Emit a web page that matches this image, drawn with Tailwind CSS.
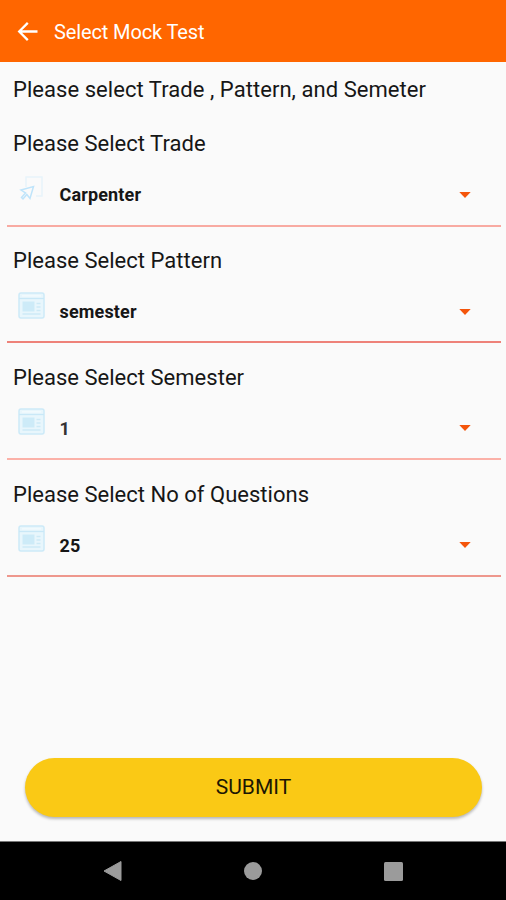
<!DOCTYPE html>
<html lang="en">
<head>
<meta charset="utf-8">
<title>Select Mock Test</title>
<script src="https://cdn.jsdelivr.net/npm/@tailwindcss/browser@4"></script>
</head>
<body class="bg-[#fafafa]">
<svg class="hidden">
  <symbol id="form" viewBox="0 0 27 27">
    <rect x="1" y="1" width="25" height="25" rx="2" fill="#e8f6fc" stroke="#cdeaf8" stroke-width="1.5"/>
    <path d="M1 6.5H26" stroke="#c9e8f7" stroke-width="1.3"/>
    <path d="M4 3.8H23" stroke="#f2fafd" stroke-width="1.5"/>
    <rect x="4.500" y="9.500" width="12" height="10" fill="#cdebf8"/>
    <path d="M18.500 11.500H22.500M18.500 15H22.500M18.500 18.500H22.500M4.500 22H22.500" stroke="#cdeaf6" stroke-width="1.3"/>
  </symbol>
  <symbol id="caret" viewBox="0 0 12 6"><path d="M0.300 0H11.700L6 6Z" fill="#f4550b"/></symbol>
</svg>
<div class="flex h-[900px] w-[506px] flex-col overflow-hidden bg-[#fafafa] font-['Roboto',sans-serif] text-[#161616]">
  <header class="flex h-[62px] shrink-0 items-center bg-[#ff6600] pt-[2px] pl-[17px] text-white">
    <svg class="mr-[16px] h-[20px] w-[21px]" viewBox="0 0 21 20" fill="none" stroke="#fff" stroke-width="2.3"><path d="M20.500 9.500H2M10.800 0.900L2.200 9.500L10.800 18.100"/></svg>
    <h1 class="text-[20px] leading-6 tracking-[-0.12px] whitespace-nowrap">Select Mock Test</h1>
  </header>
  <main class="flex grow flex-col">
    <p class="h-[66.600px] pt-[14px] pl-[13px] text-[22px] leading-[28px] tracking-[0.050px] whitespace-nowrap">Please select Trade , Pattern, and Semeter</p>
    <section class="h-[116.700px]">
      <h2 class="pl-[13px] text-[22px] leading-[30px] tracking-[0.020px]">Please Select Trade</h2>
      <div class="mr-[5px] ml-[7px] flex h-[68px] items-start border-b-2 border-[#f8aaa2] pl-[11px]">
        <svg class="mt-[16px] h-[27px] w-[27px]" viewBox="0 0 27 27" fill="none"><path d="M8 12V2H24V21H18" stroke="#e8f4fa" stroke-width="1.5"/><path d="M3 15L15.500 11.500L12 23.500L8.800 19.500L5 24L3.500 22.500L7.500 18Z" stroke="#bfe4fa" stroke-width="1.500"/></svg>
        <span class="mt-[24px] ml-[14.500px] grow text-[18px] leading-6 font-bold tracking-[0.15px]">Carpenter</span>
        <svg class="mt-[33px] mr-[30px] h-[6px] w-[12px]"><use href="#caret"/></svg>
      </div>
    </section>
    <section class="h-[116.700px]">
      <h2 class="pt-[1px] pl-[13px] text-[22px] leading-[30px] tracking-[0.020px]">Please Select Pattern</h2>
      <div class="mr-[5px] ml-[7px] flex h-[67px] items-start border-b-2 border-[#ee8279] pl-[11px]">
        <svg class="mt-[16px] h-[27px] w-[27px]"><use href="#form"/></svg>
        <span class="mt-[23.500px] ml-[14.500px] grow text-[18px] leading-6 font-bold tracking-[0.15px]">semester</span>
        <svg class="mt-[32.500px] mr-[30px] h-[6px] w-[12px]"><use href="#caret"/></svg>
      </div>
    </section>
    <section class="h-[116.700px]">
      <h2 class="pt-[1px] pl-[13px] text-[22px] leading-[30px] tracking-[0.020px]">Please Select Semester</h2>
      <div class="mr-[5px] ml-[7px] flex h-[67px] items-start border-b-2 border-[#fbb1a8] pl-[11px]">
        <svg class="mt-[15px] h-[27px] w-[27px]"><use href="#form"/></svg>
        <span class="mt-[24.500px] ml-[14.500px] grow text-[18px] leading-6 font-bold text-[#333]">1</span>
        <svg class="mt-[32px] mr-[30px] h-[6px] w-[12px]"><use href="#caret"/></svg>
      </div>
    </section>
    <section class="h-[116.700px]">
      <h2 class="pt-[1px] pl-[13px] text-[22px] leading-[30px] tracking-[0.020px]">Please Select No of Questions</h2>
      <div class="mr-[5px] ml-[7px] flex h-[67px] items-start border-b-2 border-[#ee978d] pl-[11px]">
        <svg class="mt-[15px] h-[27px] w-[27px]"><use href="#form"/></svg>
        <span class="mt-[24px] ml-[14.500px] grow text-[18px] leading-6 font-bold tracking-[0.15px]">25</span>
        <svg class="mt-[32px] mr-[30px] h-[6px] w-[12px]"><use href="#caret"/></svg>
      </div>
    </section>
    <button class="mt-auto mr-[24px] mb-[24.500px] ml-[25px] h-[59px] rounded-full bg-[#fac915] pt-[2px] text-[21px] text-[#1c1703] shadow-[0_2px_3px_rgba(0,0,0,0.27)]">SUBMIT</button>
  </main>
  <nav class="flex h-[59px] shrink-0 items-center border-t border-[#777] bg-black pl-[102.500px]">
    <svg class="h-[22px] w-[19px]" viewBox="0 0 19 22"><path d="M1 11L18 1.500V20.500Z" fill="#9b9b9b" stroke="#9b9b9b" stroke-linejoin="round"/></svg>
    <span class="ml-[122.500px] size-[18px] rounded-full bg-[#9b9b9b]"></span>
    <span class="ml-[122px] size-[19px] rounded-[1.500px] bg-[#9b9b9b]"></span>
  </nav>
</div>
</body>
</html>
